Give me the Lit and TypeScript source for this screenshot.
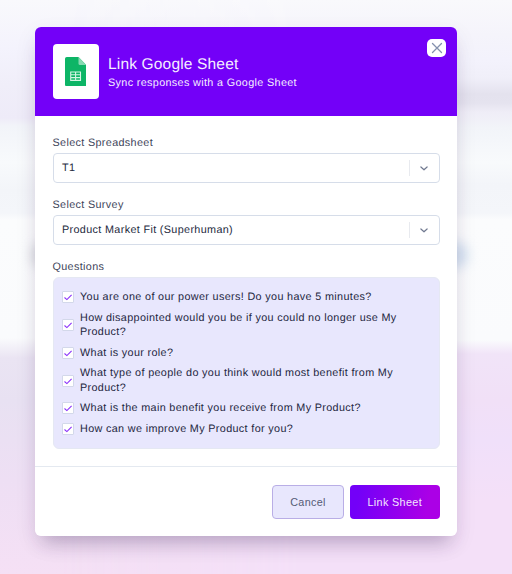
import { LitElement, html, css, svg } from "lit";
import { customElement, property } from "lit/decorators.js";

@customElement("select-field")
class SelectField extends LitElement {
  @property() label = "";
  @property() value = "";
  static styles = css`
    :host { display: block; }
    .label { line-height: 15px; color: #3d4459; }
    .box {
      display: flex; align-items: center; box-sizing: border-box;
      height: 30px; margin-top: 2px; padding-left: 8.5px;
      border: 1px solid #d6dde9; border-radius: 4px; background: #fff;
    }
    .value { flex: 1; color: #242a40; }
    .bar { width: 1px; height: 16px; background: #e8eaef; }
    .chevron { width: 29px; display: flex; justify-content: center; }
  `;
  render() {
    return html`
      <div class="label">${this.label}</div>
      <div class="box">
        <span class="value">${this.value}</span>
        <span class="bar"></span>
        <span class="chevron">
          <svg width="10" height="10" viewBox="0 0 10 10" fill="none" stroke="#707990" stroke-width="1.2" stroke-linecap="round" stroke-linejoin="round"><path d="M1.9 4 5 6.8 8.100 4" /></svg>
        </span>
      </div>
    `;
  }
}

@customElement("question-item")
class QuestionItem extends LitElement {
  static styles = css`
    :host { display: flex; align-items: center; gap: 6px; }
    .check {
      flex: none; box-sizing: border-box; width: 12px; height: 12px;
      border: 1px solid #d3d8ea; border-radius: 1px; background: #fff;
    }
    svg { display: block; }
    .text { line-height: 14.5px; color: #23263e; }
  `;
  render() {
    return html`
      <span class="check">
        <svg width="10" height="10" viewBox="0 0 10 10" fill="none" stroke="#8a2ffa" stroke-width="1.1"><path d="M1.500 5.500 3.900 7.600 8.600 2.900" /></svg>
      </span>
      <span class="text"><slot></slot></span>
    `;
  }
}

const QUESTIONS = [
  "You are one of our power users! Do you have 5 minutes?",
  "How disappointed would you be if you could no longer use My Product?",
  "What is your role?",
  "What type of people do you think would most benefit from My Product?",
  "What is the main benefit you receive from My Product?",
  "How can we improve My Product for you?",
];

const sheetIcon = svg`
  <path d="M1.800 0H13.500L21.300 8V27.500a1.800 1.800 0 0 1-1.800 1.800H1.800a1.800 1.800 0 0 1-1.800-1.800V1.800a1.800 1.800 0 0 1 1.800-1.800z" fill="#0db566" />
  <path d="M13.500 0 21.300 8H15a1.500 1.500 0 0 1-1.500-1.500z" fill="#86dab1" />
  <path d="M5.700 15h9.800v8.400h-9.800zM5.700 17.800h9.800M5.700 20.600h9.800M10.600 15v8.400" fill="none" stroke="#d5f5e4" stroke-width="1.100" />
`;

@customElement("app-root")
class AppRoot extends LitElement {
  static styles = css`
    :host {
      display: block; box-sizing: border-box; position: relative; overflow: hidden;
      height: 574px; padding: 27px 55px 0 35px;
      font: 10.8px "Liberation Sans", Arial, sans-serif; letter-spacing: 0.35px;
      text-rendering: geometricPrecision;
    }
    .backdrop { position: absolute; inset: 0; }
    .west, .east { position: absolute; inset: 0; }
    .west { background: linear-gradient(#f9f9fc 0, #f4f3fd 48px, #f0eef9 85px, #eeebf8 118px, #f2f4f9 126px,
      #f8fafc 162px, #f3f5f9 190px, #f4f6fa 213px, #fbfcfd 220px, #fafbfd 338px, #eae4f3 358px, #e8e1f2 400px, #eedff4 480px, #f5e0f5 574px); }
    .east { background: linear-gradient(#f9f9fc 0, #f5f4fb 35px, #f3f2fc 60px, #f0eff9 78px, #e4e2ee 94px, #e5e3ef 103px,
      #efedf7 112px, #f2f4f9 128px, #f8fafc 162px, #f3f5f9 185px, #f4f6fa 213px, #fbfcfd 220px, #fafbfd 340px, #f1e4f8 354px, #f1e0f7 400px, #f0e0fa 440px, #f4e0f8 500px, #f4e0f8 574px);
      mask-image: linear-gradient(90deg, transparent 60px, #000 300px); }
    .glow { position: absolute; top: 242px; height: 26px; border-radius: 13px; filter: blur(6px); }
    .blue { left: 430px; width: 38px; background: #d2e0f0; }
    .gray { left: 31px; width: 40px; background: #d9dbe0; }
    .shade { position: relative; width: 422px; border-radius: 6px; box-shadow: 0 14px 18px -8px rgba(60, 35, 85, 0.27), 0 8px 22px rgba(60, 40, 90, 0.08); }
    .modal { height: 509px; border-radius: 6px; overflow: hidden; background: #fff; display: flex; flex-direction: column; }
    .head { display: flex; height: 89px; box-sizing: border-box; padding: 17px 11px 0 17.5px; background: #7300f8; color: #f5eeff; }
    .logo { width: 46px; height: 54.5px; border-radius: 4px; background: #fff; display: flex; align-items: center; justify-content: center; }
    .titles { flex: 1; margin: 11px 0 0 9.5px; }
    .title { font-size: 15.5px; line-height: 20px; letter-spacing: 0.17px; }
    .sub { line-height: 16px; letter-spacing: 0.35px; }
    .close { width: 19px; height: 18px; margin-top: -5.5px; border-radius: 5px; background: #fff; display: flex; align-items: center; justify-content: center; }
    .body { flex: 1; padding: 20px 17.5px 0; }
    .body select-field { margin-bottom: 15px; }
    .label { line-height: 15px; color: #3d4459; }
    .list {
      display: flex; flex-direction: column; gap: 6px; box-sizing: border-box; height: 172px; margin-top: 2px;
      padding: 12px 30px 0 8.5px; border: 1px solid #e5e8f3; border-radius: 6px; background: #e8e7fd;
    }
    .foot { display: flex; justify-content: flex-end; gap: 6px; box-sizing: border-box; height: 70px; padding: 18px 17.5px 0 0; border-top: 1px solid #e4e9f0; }
    .btn { box-sizing: border-box; height: 34px; border-radius: 4px; font: inherit; letter-spacing: 0.35px; padding: 0 0 1px; }
    .cancel { width: 72px; border: 1px solid #b9aee6; background: #e8e7fd; color: #555b75; }
    .go { width: 89.5px; border: 0; background: linear-gradient(100deg, #7300f8 10%, #ab00e6 85%); color: #f3e6ff; }
  `;
  render() {
    return html`
      <div class="backdrop"><div class="west"></div><div class="east"></div></div>
      <div class="glow blue"></div>
      <div class="glow gray"></div>
      <div class="shade">
        <div class="modal">
          <div class="head">
            <div class="logo"><svg width="21.300" height="29.300" viewBox="0 0 21.300 29.300">${sheetIcon}</svg></div>
            <div class="titles">
              <div class="title">Link Google Sheet</div>
              <div class="sub">Sync responses with a Google Sheet</div>
            </div>
            <div class="close">
              <svg width="12" height="12" viewBox="0 0 12 12" stroke="#8490ad" stroke-width="1.300" stroke-linecap="round"><path d="M1.500 1.500 10.500 10.500M10.500 1.500 1.500 10.500" /></svg>
            </div>
          </div>
          <div class="body">
            <select-field label="Select Spreadsheet" value="T1"></select-field>
            <select-field label="Select Survey" value="Product Market Fit (Superhuman)"></select-field>
            <div class="label">Questions</div>
            <div class="list">${QUESTIONS.map((q) => html`<question-item>${q}</question-item>`)}</div>
          </div>
          <div class="foot">
            <button class="btn cancel">Cancel</button>
            <button class="btn go">Link Sheet</button>
          </div>
        </div>
      </div>
    `;
  }
}
